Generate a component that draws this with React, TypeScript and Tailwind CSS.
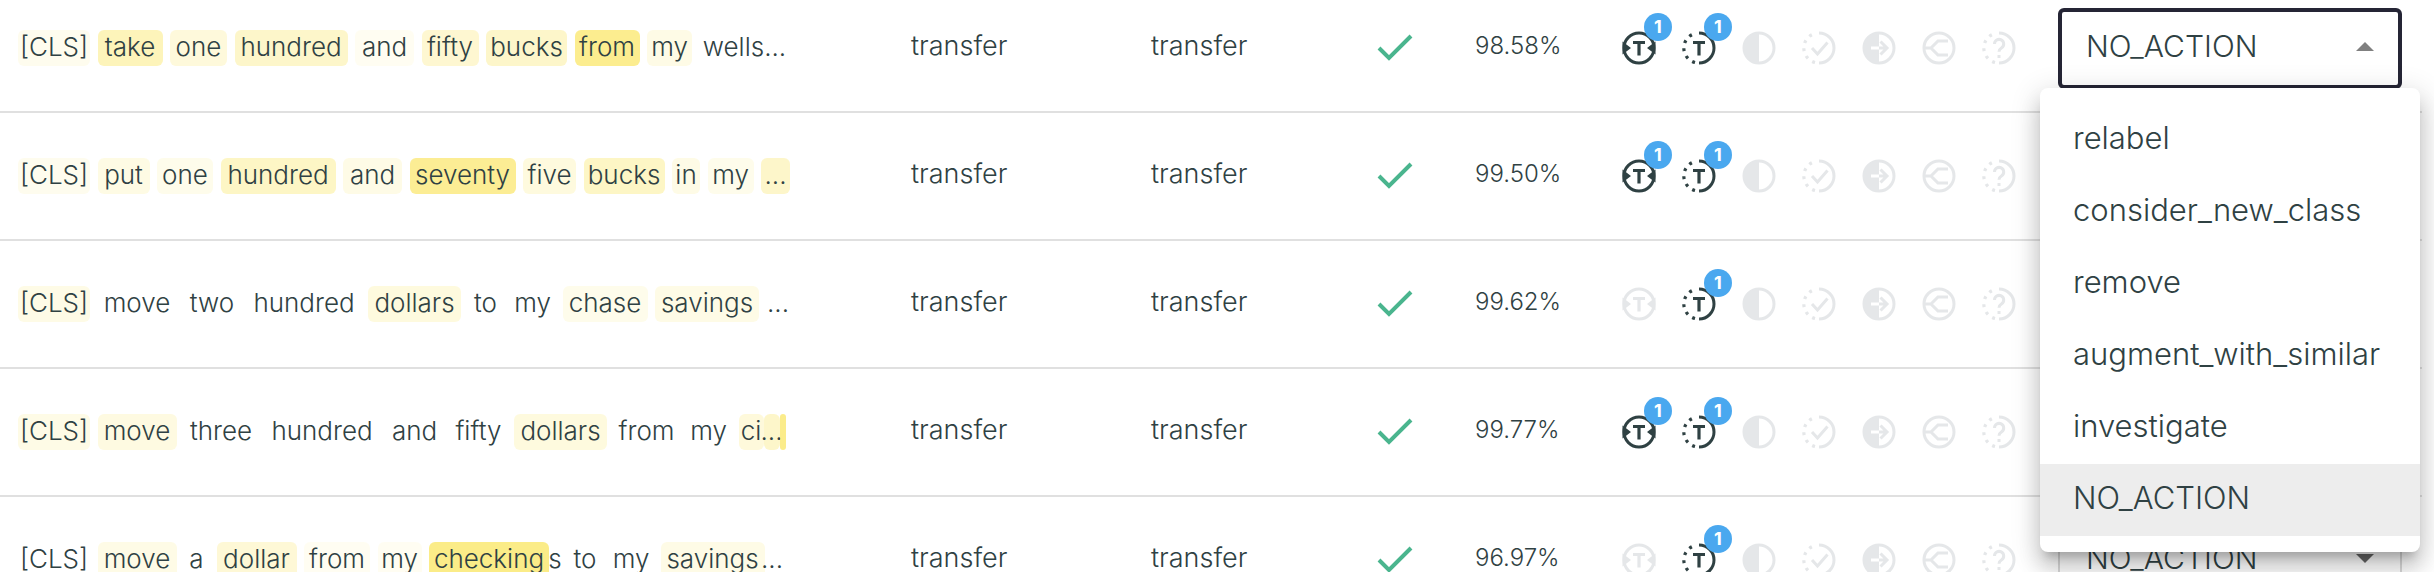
import React from 'react';

type Token = { t: string; w: number; a: number; flush?: boolean };

const FONT = "font-['Inter',sans-serif] font-light";

// a = attention weight, drives the yellow highlight opacity
const rows: { tokens: Token[]; pct: string; active: boolean }[] = [
  {
    pct: '98.58%',
    active: true,
    tokens: [
      { t: '[CLS]', w: 72, a: 0.1 },
      { t: 'take', w: 65, a: 0.42 },
      { t: 'one', w: 57, a: 0.22 },
      { t: 'hundred', w: 113, a: 0.32 },
      { t: 'and', w: 59, a: 0.08 },
      { t: 'fifty', w: 57, a: 0.28 },
      { t: 'bucks', w: 81, a: 0.32 },
      { t: 'from', w: 65, a: 0.68 },
      { t: 'my', w: 45, a: 0.15 },
      { t: 'wells...', w: 90, a: 0 },
    ],
  },
  {
    pct: '99.50%',
    active: true,
    tokens: [
      { t: '[CLS]', w: 72, a: 0.1 },
      { t: 'put', w: 52, a: 0.16 },
      { t: 'one', w: 56, a: 0.12 },
      { t: 'hundred', w: 115, a: 0.35 },
      { t: 'and', w: 59, a: 0.15 },
      { t: 'seventy', w: 106, a: 0.65 },
      { t: 'five', w: 53, a: 0.2 },
      { t: 'bucks', w: 81, a: 0.35 },
      { t: 'in', w: 28, a: 0.15 },
      { t: 'my', w: 46, a: 0.12 },
      { t: '...', w: 29, a: 0.32 },
    ],
  },
  {
    pct: '99.62%',
    active: false,
    tokens: [
      { t: '[CLS]', w: 72, a: 0.15 },
      { t: 'move', w: 79, a: 0 },
      { t: 'two', w: 56, a: 0 },
      { t: 'hundred', w: 113, a: 0 },
      { t: 'dollars', w: 93, a: 0.2 },
      { t: 'to', w: 34, a: 0 },
      { t: 'my', w: 45, a: 0 },
      { t: 'chase', w: 85, a: 0.12 },
      { t: 'savings', w: 104, a: 0.15 },
      { t: '...', w: 23, a: 0 },
    ],
  },
  {
    pct: '99.77%',
    active: true,
    tokens: [
      { t: '[CLS]', w: 72, a: 0.15 },
      { t: 'move', w: 79, a: 0.18 },
      { t: 'three', w: 74, a: 0 },
      { t: 'hundred', w: 113, a: 0 },
      { t: 'and', w: 57, a: 0 },
      { t: 'fifty', w: 56, a: 0 },
      { t: 'dollars', w: 93, a: 0.2 },
      { t: 'from', w: 64, a: 0 },
      { t: 'my', w: 45, a: 0 },
      { t: 'ci', w: 25, a: 0.22 },
      { t: '...', w: 16, a: 0.32, flush: true },
      { t: '', w: 6, a: 0.7, flush: true },
    ],
  },
  {
    pct: '96.97%',
    active: false,
    tokens: [
      { t: '[CLS]', w: 72, a: 0 },
      { t: 'move', w: 79, a: 0.15 },
      { t: 'a', w: 25, a: 0 },
      { t: 'dollar', w: 80, a: 0.25 },
      { t: 'from', w: 66, a: 0.08 },
      { t: 'my', w: 44, a: 0.08 },
      { t: 'checking', w: 120, a: 0.72 },
      { t: 's', w: 12, a: 0, flush: true },
      { t: 'to', w: 33, a: 0 },
      { t: 'my', w: 44, a: 0 },
      { t: 'savings', w: 104, a: 0.15 },
      { t: '...', w: 15, a: 0, flush: true },
    ],
  },
];

const menuItems = ['relabel', 'consider_new_class', 'remove', 'augment_with_similar', 'investigate', 'NO_ACTION'];

const DARK = '#2f4143';
const FADED = '#e5e7e9';

// Small round icons from the behaviour column, 34px box
const IconBase: React.FC<{ color: string; children: React.ReactNode }> = ({ color, children }) => (
  <svg width="34" height="34" viewBox="0 0 34 34" fill="none" stroke={color} strokeWidth="3">
    {children}
  </svg>
);

const TLetter = () => <path d="M11 11.5h12M17 11.5v13" strokeWidth="3.2" />;

const Solid = ({ color }: { color: string }) => (
  <IconBase color={color}>
    <circle cx="17" cy="17" r="15" />
    <TLetter />
    <path d="M0.5 10.5l8.5 6.5-8.5 6.5zM33.5 10.5l-8.5 6.5 8.5 6.5z" fill={color} stroke="none" />
  </IconBase>
);

const Dotted = ({ color, children }: { color: string; children: React.ReactNode }) => (
  <IconBase color={color}>
    <path d="M17 2A15 15 0 1 1 17 32" />
    <path d="M13 31.5A15 15 0 0 1 13 2.5" strokeDasharray="3 5.2" strokeWidth="3.2" />
    {children}
  </IconBase>
);

const Half = () => (
  <IconBase color={FADED}>
    <circle cx="17" cy="17" r="15" />
    <path d="M17 2A15 15 0 0 0 17 32z" fill={FADED} stroke="none" />
  </IconBase>
);

const Arrow = () => (
  <IconBase color={FADED}>
    <circle cx="17" cy="17" r="15" />
    <path d="M17 2A15 15 0 0 0 17 32z" fill={FADED} stroke="none" />
    <path d="M17 17h8M18.5 10.5l6.5 6.5-6.5 6.5" />
    <path d="M9 17h8" stroke="#ffffff" />
  </IconBase>
);

const Branch = () => (
  <IconBase color={FADED}>
    <circle cx="17" cy="17" r="15" />
    <path d="M26 10h-10l-7 7 7 7h10M9 17H2" />
  </IconBase>
);

const Badge = () => (
  <span className="absolute -top-[18px] left-[22px] flex h-7 w-7 items-center justify-center rounded-full bg-[#4aa8ef] text-[18px] font-bold leading-none text-white">
    1
  </span>
);

const Behaviours: React.FC<{ active: boolean }> = ({ active }) => (
  <div className="flex w-[436px] shrink-0 gap-[26px]">
    <span className="relative flex">
      <Solid color={active ? DARK : FADED} />
      {active && <Badge />}
    </span>
    <span className="relative flex">
      <Dotted color={DARK}>
        <TLetter />
      </Dotted>
      <Badge />
    </span>
    <Half />
    <Dotted color={FADED}>
      <path d="M10 17l5.5 6L25.5 11.5" />
    </Dotted>
    <Arrow />
    <Branch />
    <Dotted color={FADED}>
      <path d="M12.5 13a4.6 4.6 0 1 1 7.2 3.8c-1.8 1.2-2.7 2-2.7 4" />
      <path d="M17 24v3" />
    </Dotted>
  </div>
);

const Tokens: React.FC<{ tokens: Token[] }> = ({ tokens }) => (
  <div className="w-[893px] shrink-0">
    <div className="flex w-[772px] overflow-hidden">
      {tokens.map((tok, i) => (
        <span
          key={i}
          className="flex h-9 shrink-0 items-center justify-center rounded-md pb-[3px] leading-none"
          style={{
            width: tok.w,
            marginLeft: i === 0 || tok.flush ? 0 : 7.5,
            backgroundColor: `rgba(250, 228, 90, ${tok.a})`,
          }}>
          {tok.t}
        </span>
      ))}
    </div>
  </div>
);

const Select: React.FC<{ open?: boolean }> = ({ open }) => (
  <div
    className={`flex h-[81px] w-[344px] shrink-0 items-center justify-between rounded-md bg-white pb-[3px] text-[30px] ${
      open ? 'border-4 border-[#252535] pl-[24px] pr-[24px]' : 'border-2 border-[#d9d9d9] pl-[26px] pr-[26px]'
    }`}>
    <span>NO_ACTION</span>
    <span
      className={`h-0 w-0 border-x-[9px] border-x-transparent ${
        open ? 'border-b-[9px] border-b-[#808080]' : 'border-t-[9px] border-t-[#666666]'
      }`}
    />
  </div>
);

export default function App() {
  return (
    <div className={`relative h-[572px] w-[2434px] overflow-hidden bg-white text-[27px] text-[#2f4143] ${FONT}`}>
      <div className="-mt-[15px] w-[2422px]">
        {rows.map((row, i) => (
          <div key={i} className="flex h-[128px] items-center border-b-2 border-[#e0e0e0] pl-[18px]">
            <div className="text-[26px]">
              <Tokens tokens={row.tokens} />
            </div>
            <span className="w-[240px] shrink-0 pb-[4px]">transfer</span>
            <span className="w-[226px] shrink-0 pb-[4px]">transfer</span>
            <span className="flex w-[98px] shrink-0">
              <svg width="36" height="28" viewBox="0 0 36 28" fill="none" stroke="#4ab58e" strokeWidth="4">
                <path d="M2 14l10 10L34 2" />
              </svg>
            </span>
            <span className="w-[147px] shrink-0 pb-[4px] text-[24px]">{row.pct}</span>
            <Behaviours active={row.active} />
            <Select open={i === 0} />
          </div>
        ))}
      </div>

      {/* open dropdown menu */}
      <div className="absolute left-[2040px] top-[88px] w-[380px] rounded-lg bg-white py-4 text-[31px] shadow-[0_10px_10px_-6px_rgba(0,0,0,0.2),0_16px_20px_2px_rgba(0,0,0,0.14),0_6px_28px_4px_rgba(0,0,0,0.12)]">
        {menuItems.map((item) => (
          <div key={item} className={`flex h-[72px] items-center pb-[3px] pl-[33px] ${item === 'NO_ACTION' ? 'bg-[#ededed]' : ''}`}>
            {item}
          </div>
        ))}
      </div>
    </div>
  );
}
